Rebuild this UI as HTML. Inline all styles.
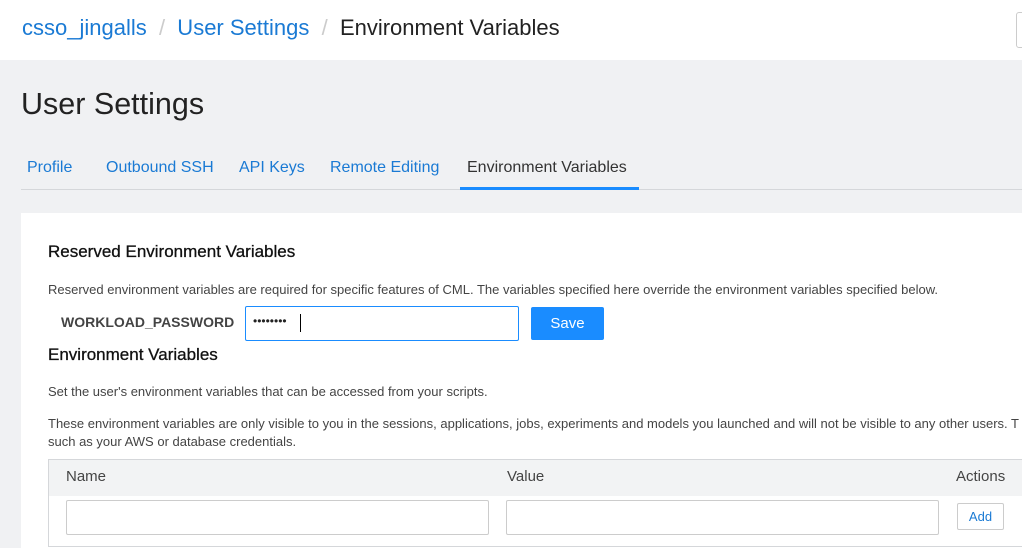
<!DOCTYPE html>
<html><head><style>
body{margin:0;width:1022px;height:548px;overflow:hidden;background:#f0f1f3;font-family:"Liberation Sans",sans-serif;position:relative}
.a{position:absolute;white-space:nowrap}
</style></head><body>
<div class="a" style="left:0;top:0;width:1022px;height:60px;background:#fff"></div>
<div class="a" style="left:1016px;top:12px;width:10px;height:34px;border:1px solid #ccc;border-radius:3px"></div>
<div class="a" style="left:22px;top:15px;font-size:22px;color:#1a7ad4">csso_jingalls <span style="color:#ccc">&nbsp;/&nbsp;</span> User Settings <span style="color:#ccc">&nbsp;/&nbsp;</span> <span style="color:#222">Environment Variables</span></div>
<div class="a" style="left:21px;top:87px;font-size:30.5px;color:#222">User Settings</div>
<div class="a" style="left:27px;top:159px;font-size:16px;color:#1a7ad4">Profile</div>
<div class="a" style="left:106px;top:159px;font-size:16px;color:#1a7ad4">Outbound SSH</div>
<div class="a" style="left:239px;top:159px;font-size:16px;color:#1a7ad4">API Keys</div>
<div class="a" style="left:330px;top:159px;font-size:16px;color:#1a7ad4">Remote Editing</div>
<div class="a" style="left:467px;top:159px;font-size:16px;color:#333">Environment Variables</div>
<div class="a" style="left:21px;top:189px;width:1001px;height:1px;background:#d5d7da"></div>
<div class="a" style="left:460px;top:187px;width:179px;height:3px;background:#1a8cff"></div>
<div class="a" style="left:21px;top:213px;width:1001px;height:335px;background:#fff"></div>
<div class="a" style="left:48px;top:242px;font-size:17px;color:#111;-webkit-text-stroke:0.3px #111">Reserved Environment Variables</div>
<div class="a" style="left:48px;top:282px;font-size:13px;color:#444">Reserved environment variables are required for specific features of CML. The variables specified here override the environment variables specified below.</div>
<div class="a" style="left:61px;top:314px;font-size:14px;font-weight:bold;color:#444">WORKLOAD_PASSWORD</div>
<div class="a" style="left:245px;top:306px;width:272px;height:33px;border:1px solid #1a8cff;border-radius:2px;box-sizing:content-box"></div>
<div class="a" style="left:253px;top:314px;font-size:12px;color:#222;letter-spacing:0px">••••••••</div>
<div class="a" style="left:300px;top:314px;width:1px;height:18px;background:#000"></div>
<div class="a" style="left:531px;top:307px;width:73px;height:33px;background:#1a8cff;border-radius:2px;color:#fff;font-size:15px;text-align:center;line-height:33px">Save</div>
<div class="a" style="left:48px;top:345px;font-size:17px;color:#111;-webkit-text-stroke:0.3px #111">Environment Variables</div>
<div class="a" style="left:48px;top:384px;font-size:13px;color:#444">Set the user's environment variables that can be accessed from your scripts.</div>
<div class="a" style="left:48px;top:416px;font-size:13px;color:#444">These environment variables are only visible to you in the sessions, applications, jobs, experiments and models you launched and will not be visible to any other users. T</div>
<div class="a" style="left:48px;top:434px;font-size:13px;color:#444">such as your AWS or database credentials.</div>
<div class="a" style="left:48px;top:459px;width:980px;height:86px;border:1px solid #d5d7da;background:#fff"></div>
<div class="a" style="left:49px;top:460px;width:980px;height:36px;background:#f2f3f4"></div>
<div class="a" style="left:66px;top:468px;font-size:15px;color:#444">Name</div>
<div class="a" style="left:507px;top:468px;font-size:15px;color:#444">Value</div>
<div class="a" style="left:956px;top:468px;font-size:15px;color:#444">Actions</div>
<div class="a" style="left:66px;top:500px;width:421px;height:33px;border:1px solid #ccc;border-radius:2px"></div>
<div class="a" style="left:506px;top:500px;width:431px;height:33px;border:1px solid #ccc;border-radius:2px"></div>
<div class="a" style="left:957px;top:503px;width:45px;height:25px;border:1px solid #ccc;border-radius:2px;color:#1a7ad4;font-size:13px;text-align:center;line-height:25px">Add</div>
</body></html>
